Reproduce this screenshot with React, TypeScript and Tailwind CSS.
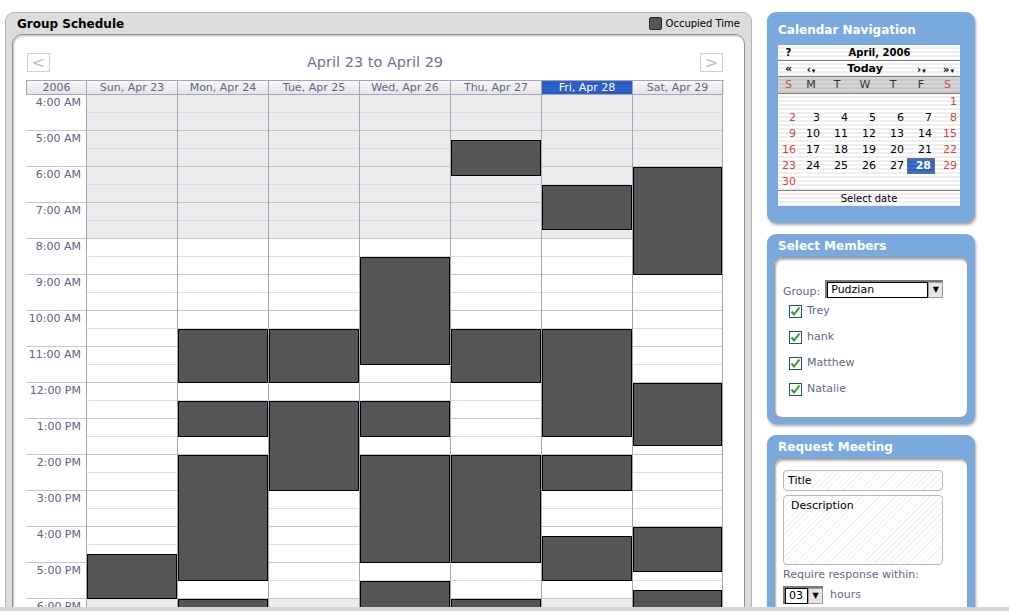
import { ReactNode } from "react";

type Block = [number, number];

const HOURS = Array.from({ length: 20 }, (_, i) => i + 4);

const DAYS = [
  "Sun, Apr 23",
  "Mon, Apr 24",
  "Tue, Apr 25",
  "Wed, Apr 26",
  "Thu, Apr 27",
  "Fri, Apr 28",
  "Sat, Apr 29",
];

// occupied ranges per day, in hours (24h clock)
const BUSY: Block[][] = [
  [[16.75, 18]],
  [[10.5, 12], [12.5, 13.5], [14, 17.5], [18, 20]],
  [[10.5, 12], [12.5, 15]],
  [[8.5, 11.5], [12.5, 13.5], [14, 17], [17.5, 20]],
  [[5.25, 6.25], [10.5, 12], [14, 17], [18, 20]],
  [[6.5, 7.75], [10.5, 13.5], [14, 15], [16.25, 17.5]],
  [[6, 9], [12, 13.75], [16, 17.25], [17.75, 20]],
];

const HOUR_PX = 36;

const fmtHour = (h: number) => `${h % 12 === 0 ? 12 : h % 12}:00 ${h < 12 ? "AM" : "PM"}`;

const offHours = (h: number) => h < 8 || h >= 18;

function TimeColumn() {
  return (
    <div className="w-[60px] shrink-0">
      {HOURS.map((h, i) => (
        <div
          key={h}
          className={`h-[36px] border-t pr-[5px] pt-[1px] text-right text-[11px] leading-[14px] text-[#5d6287] ${
            i === 0 ? "border-[#a3a3c2]" : "border-[#c6c6c6]"
          }`}
        >
          {fmtHour(h)}
        </div>
      ))}
    </div>
  );
}

function DayColumn({ blocks, last }: { blocks: Block[]; last: boolean }) {
  return (
    <div className={`relative w-[91px] shrink-0 border-l border-[#a3a3c2] ${last ? "border-r" : ""}`}>
      {HOURS.map((h, i) => (
        <div key={h} className={offHours(h) ? "bg-[#ececec]" : "bg-white"}>
          <div className={`h-[18px] border-t ${i === 0 ? "border-[#a3a3c2]" : "border-[#c6c6c6]"}`} />
          <div className="h-[18px] border-t border-[#d7dcee]" />
        </div>
      ))}
      {blocks.map(([s, e]) => (
        <div
          key={s}
          className="absolute left-0 right-0 border border-black bg-[#555555]"
          style={{ top: (s - 4) * HOUR_PX + 1, height: (e - s) * HOUR_PX }}
        />
      ))}
    </div>
  );
}

function NavButton({ children }: { children: ReactNode }) {
  return (
    <div className="flex h-[19px] w-[23px] items-center justify-center border border-[#cfcfcf] bg-white text-[16px] leading-none text-[#bdbdbd]">
      {children}
    </div>
  );
}

function Schedule() {
  return (
    <div className="ml-[5px] mt-[12px] w-[747px] shrink-0 rounded-t-[9px] border border-[#b3b3b3] bg-[#dcdcdc] px-[6px]">
      <div className="flex h-[21px] items-center justify-between pl-[5px] pr-[5px]">
        <span className="text-[12px] font-bold text-black">Group Schedule</span>
        <div className="flex items-center gap-[4px]">
          <div className="h-[13px] w-[13px] rounded-[2px] border border-[#222] bg-[#555555]" />
          <span className="text-[10px] text-black">Occupied Time</span>
        </div>
      </div>
      <div className="h-[600px] rounded-t-[10px] border border-[#8e8e8e] bg-white pl-[13px] pr-[20px] pt-[18px] shadow-[inset_1px_1px_2px_rgba(0,0,0,0.25)]">
        <div className="mb-[8px] flex h-[19px] items-center justify-between pl-[1px] pr-[1px]">
          <NavButton>&lt;</NavButton>
          <span className="text-[14.5px] text-[#6b7199]">April 23 to April 29</span>
          <NavButton>&gt;</NavButton>
        </div>
        <div className="flex h-[14px] border-t border-[#a3a3c2] bg-[linear-gradient(#f7f7f7,#e4e4e4)] text-[11px] leading-[13px] text-[#60668a]">
          <div className="w-[60px] shrink-0 border-l border-[#a3a3c2] text-center">2006</div>
          {DAYS.map((d, i) => (
            <div
              key={d}
              className={`w-[91px] shrink-0 border-l border-[#a3a3c2] text-center ${i === 6 ? "border-r" : ""} ${
                i === 5
                  ? "bg-[repeating-linear-gradient(180deg,#2f63cc_0px,#2f63cc_2px,#2557bd_2px,#2557bd_3px)] text-white"
                  : ""
              }`}
            >
              {d}
            </div>
          ))}
        </div>
        <div className="flex">
          <TimeColumn />
          {BUSY.map((b, i) => (
            <DayColumn key={i} blocks={b} last={i === 6} />
          ))}
        </div>
      </div>
    </div>
  );
}

function Panel({ title, children, className }: { title: string; children: ReactNode; className?: string }) {
  return (
    <div className={`rounded-[9px] bg-[#7aaadd] shadow-[1px_2px_3px_rgba(0,0,0,0.35)] ${className ?? ""}`}>
      <div className="pl-[11px] text-[12px] font-bold leading-[16px] text-white">{title}</div>
      {children}
    </div>
  );
}

const CAL_COLS = "grid grid-cols-[21px_24px_28px_28px_28px_28px_25px]";
const STRIPE_LIGHT = "bg-[repeating-linear-gradient(180deg,#ffffff_0px,#ffffff_2px,#eeeeee_2px,#eeeeee_4px)]";

const WEEKS: (number | null)[][] = [
  [null, null, null, null, null, null, 1],
  [2, 3, 4, 5, 6, 7, 8],
  [9, 10, 11, 12, 13, 14, 15],
  [16, 17, 18, 19, 20, 21, 22],
  [23, 24, 25, 26, 27, 28, 29],
  [30, null, null, null, null, null, null],
];

function Caret() {
  return <span className="ml-[1px] inline-block text-[7px] leading-none">▾</span>;
}

function MiniCalendar() {
  return (
    <div className="w-[182px] text-[11px] text-black">
      <div className={`${CAL_COLS} h-[16px] items-center border-b border-[#808080] text-[10px] font-bold ${STRIPE_LIGHT}`}>
        <div className="text-center">?</div>
        <div className="col-span-6 text-center">April, 2006</div>
      </div>
      <div className={`${CAL_COLS} h-[16px] items-center border-b border-[#808080] text-[10px] font-bold ${STRIPE_LIGHT}`}>
        <div className="text-center text-[11px]">«</div>
        <div className="text-center">
          ‹<Caret />
        </div>
        <div className="col-span-3 text-center text-[11px]">Today</div>
        <div className="pl-[10px]">
          ›<Caret />
        </div>
        <div className="pl-[8px]">
          »<Caret />
        </div>
      </div>
      <div
        className={`${CAL_COLS} h-[17px] items-center border-b border-[#808080] bg-[repeating-linear-gradient(180deg,#d6d6d6_0px,#d6d6d6_2px,#c9c9c9_2px,#c9c9c9_4px)] text-[11px]`}
      >
        {["S", "M", "T", "W", "T", "F", "S"].map((d, i) => (
          <div key={i} className={`text-center ${i === 0 || i === 6 ? "text-[#d04848]" : "text-[#333]"}`}>
            {d}
          </div>
        ))}
      </div>
      <div className={STRIPE_LIGHT}>
        {WEEKS.map((w, r) => (
          <div key={r} className={`${CAL_COLS} h-[16px]`}>
            {w.map((d, i) =>
              d === 28 ? (
                <div
                  key={i}
                  className="border border-[#6e6e6e] bg-[repeating-linear-gradient(180deg,#3a6fd0_0px,#3a6fd0_2px,#2c5fc0_2px,#2c5fc0_4px)] pr-[3px] text-right font-bold leading-[14px] text-white"
                >
                  28
                </div>
              ) : (
                <div
                  key={i}
                  className={`pr-[3px] text-right leading-[16px] ${i === 0 || i === 6 ? "text-[#d04848]" : "text-black"}`}
                >
                  {d ?? ""}
                </div>
              )
            )}
          </div>
        ))}
      </div>
      <div className={`h-[16px] border-t border-[#808080] text-center text-[10px] leading-[15px] ${STRIPE_LIGHT}`}>
        Select date
      </div>
    </div>
  );
}

function Check() {
  return (
    <div className="flex h-[13px] w-[13px] items-center justify-center border border-[#25507f] bg-white">
      <svg width="11" height="11" viewBox="0 0 11 11">
        <path d="M1.5 5.5 L4 8.5 L9.5 1.5" fill="none" stroke="#2a9d2a" strokeWidth="2" />
      </svg>
    </div>
  );
}

function FakeSelect({ value, width }: { value: string; width: string }) {
  return (
    <div className={`flex h-[18px] ${width} border-l-2 border-t-2 border-[#7a7a7a] bg-white`}>
      <div className="flex-1 border border-black pl-[3px] text-[11px] leading-[13px] text-black">{value}</div>
      <div className="flex w-[15px] items-center justify-center border border-[#9a9a9a] bg-[#e6e6e6] text-[8px] text-black">
        ▼
      </div>
    </div>
  );
}

function InnerBox({ children, className }: { children: ReactNode; className?: string }) {
  return (
    <div
      className={`mx-[7px] rounded-[8px] border border-[#9c9c9c] bg-white shadow-[inset_1px_2px_2px_rgba(0,0,0,0.3)] ${className ?? ""}`}
    >
      {children}
    </div>
  );
}

const FIELD =
  "rounded-[4px] border border-[#b9b9b9] bg-[repeating-linear-gradient(135deg,#ffffff_0px,#ffffff_3px,#f2f2f2_3px,#f2f2f2_4px)] text-[11px] text-black";

function Sidebar() {
  return (
    <div className="ml-[15px] mt-[12px] flex w-[208px] shrink-0 flex-col gap-[11px]">
      <Panel title="Calendar Navigation" className="h-[211px] pt-[10px]">
        <div className="ml-[11px] mt-[7px]">
          <MiniCalendar />
        </div>
      </Panel>
      <Panel title="Select Members" className="h-[190px] pt-[4px]">
        <InnerBox className="mt-[3px] h-[161px] pl-[8px] pt-[22px] text-[11px] text-[#62688c]">
          <div className="flex items-end gap-[5px]">
            <span className="leading-[13px]">Group:</span>
            <FakeSelect value="Pudzian" width="w-[118px]" />
          </div>
          <div className="pl-[6px]">
            {["Trey", "hank", "Matthew", "Natalie"].map((n) => (
              <div key={n} className="flex h-[26px] items-center gap-[5px]">
                <Check />
                <span>{n}</span>
              </div>
            ))}
          </div>
        </InnerBox>
      </Panel>
      <Panel title="Request Meeting" className="h-[200px] pt-[4px]">
        <InnerBox className="mt-[3px] h-[200px] pl-[8px] pt-[11px] text-[11px] text-[#62688c]">
          <div className={`${FIELD} h-[21px] w-[160px] pl-[4px] leading-[19px]`}>Title</div>
          <div className={`${FIELD} mt-[4px] h-[70px] w-[160px] pl-[7px] pt-[2px]`}>Description</div>
          <div className="mt-[3px] leading-[14px]">Require response within:</div>
          <div className="mt-[4px] flex items-center gap-[7px]">
            <FakeSelect value="03" width="w-[40px]" />
            <span>hours</span>
          </div>
        </InnerBox>
      </Panel>
    </div>
  );
}

export default function App() {
  return (
    <div className="relative flex h-[611px] w-[1009px] items-start overflow-hidden bg-white font-['DejaVu_Sans',Verdana,sans-serif]">
      <Schedule />
      <Sidebar />
      <div className="absolute bottom-0 left-0 right-0 h-[4px] bg-[#d6d6d6]" />
    </div>
  );
}
